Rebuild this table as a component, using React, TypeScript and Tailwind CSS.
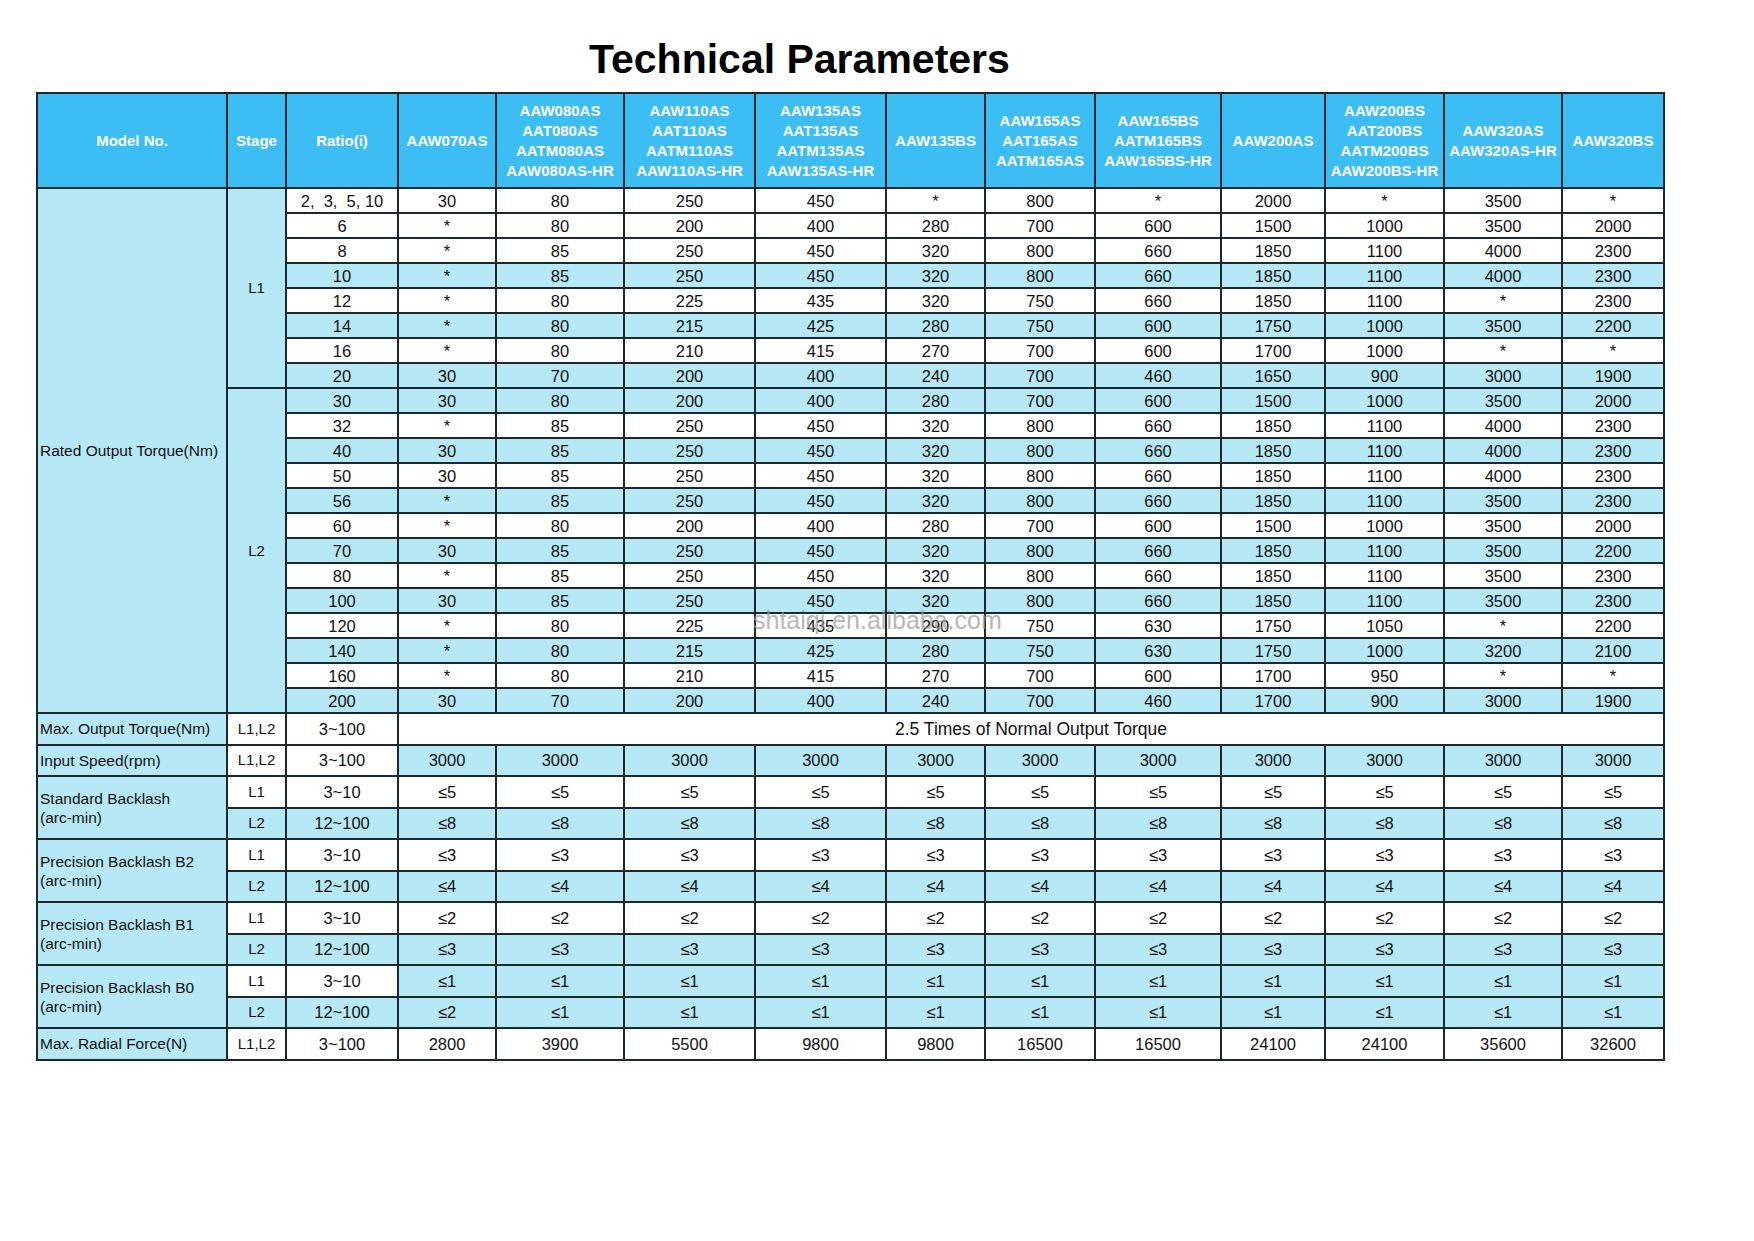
const font = "font-['Liberation_Sans',Arial,sans-serif]";

const models = [
  ["AAW070AS"],
  ["AAW080AS", "AAT080AS", "AATM080AS", "AAW080AS-HR"],
  ["AAW110AS", "AAT110AS", "AATM110AS", "AAW110AS-HR"],
  ["AAW135AS", "AAT135AS", "AATM135AS", "AAW135AS-HR"],
  ["AAW135BS"],
  ["AAW165AS", "AAT165AS", "AATM165AS"],
  ["AAW165BS", "AATM165BS", "AAW165BS-HR"],
  ["AAW200AS"],
  ["AAW200BS", "AAT200BS", "AATM200BS", "AAW200BS-HR"],
  ["AAW320AS", "AAW320AS-HR"],
  ["AAW320BS"],
];

const widths = [190, 59, 112, 98, 128, 131, 131, 99, 110, 126, 104, 119, 118, 102];

type TRow = { r: string; v: string[]; blue: boolean };

const l1: TRow[] = [
  { r: "2,\u00a0 3,\u00a0 5, 10", v: ["30", "80", "250", "450", "*", "800", "*", "2000", "*", "3500", "*"], blue: false },
  { r: "6", v: ["*", "80", "200", "400", "280", "700", "600", "1500", "1000", "3500", "2000"], blue: false },
  { r: "8", v: ["*", "85", "250", "450", "320", "800", "660", "1850", "1100", "4000", "2300"], blue: false },
  { r: "10", v: ["*", "85", "250", "450", "320", "800", "660", "1850", "1100", "4000", "2300"], blue: true },
  { r: "12", v: ["*", "80", "225", "435", "320", "750", "660", "1850", "1100", "*", "2300"], blue: false },
  { r: "14", v: ["*", "80", "215", "425", "280", "750", "600", "1750", "1000", "3500", "2200"], blue: true },
  { r: "16", v: ["*", "80", "210", "415", "270", "700", "600", "1700", "1000", "*", "*"], blue: false },
  { r: "20", v: ["30", "70", "200", "400", "240", "700", "460", "1650", "900", "3000", "1900"], blue: true },
];

const l2: TRow[] = [
  { r: "30", v: ["30", "80", "200", "400", "280", "700", "600", "1500", "1000", "3500", "2000"], blue: true },
  { r: "32", v: ["*", "85", "250", "450", "320", "800", "660", "1850", "1100", "4000", "2300"], blue: false },
  { r: "40", v: ["30", "85", "250", "450", "320", "800", "660", "1850", "1100", "4000", "2300"], blue: true },
  { r: "50", v: ["30", "85", "250", "450", "320", "800", "660", "1850", "1100", "4000", "2300"], blue: false },
  { r: "56", v: ["*", "85", "250", "450", "320", "800", "660", "1850", "1100", "3500", "2300"], blue: true },
  { r: "60", v: ["*", "80", "200", "400", "280", "700", "600", "1500", "1000", "3500", "2000"], blue: false },
  { r: "70", v: ["30", "85", "250", "450", "320", "800", "660", "1850", "1100", "3500", "2200"], blue: true },
  { r: "80", v: ["*", "85", "250", "450", "320", "800", "660", "1850", "1100", "3500", "2300"], blue: false },
  { r: "100", v: ["30", "85", "250", "450", "320", "800", "660", "1850", "1100", "3500", "2300"], blue: true },
  { r: "120", v: ["*", "80", "225", "435", "290", "750", "630", "1750", "1050", "*", "2200"], blue: false },
  { r: "140", v: ["*", "80", "215", "425", "280", "750", "630", "1750", "1000", "3200", "2100"], blue: true },
  { r: "160", v: ["*", "80", "210", "415", "270", "700", "600", "1700", "950", "*", "*"], blue: false },
  { r: "200", v: ["30", "70", "200", "400", "240", "700", "460", "1700", "900", "3000", "1900"], blue: true },
];

const same = (s: string) => Array(11).fill(s);

// backlash groups: L1 row + L2 row each
const backlash = [
  { label: ["Standard Backlash", "(arc-min)"], a: same("≤5"), b: same("≤8"), aBlue: false },
  { label: ["Precision Backlash B2", "(arc-min)"], a: same("≤3"), b: same("≤4"), aBlue: false },
  { label: ["Precision Backlash B1", "(arc-min)"], a: same("≤2"), b: same("≤3"), aBlue: false },
  { label: ["Precision Backlash B0", "(arc-min)"], a: same("≤1"), b: ["≤2", ...Array(10).fill("≤1")], aBlue: true },
];

const radial = ["2800", "3900", "5500", "9800", "9800", "16500", "16500", "24100", "24100", "35600", "32600"];

const bd = "border-2 border-[#1b2830] p-0";
const lb = "bg-[#b6e8f5]";
const num = "text-center text-[16.5px] leading-5 text-[#111]";
const small = "text-center text-[15px] leading-5 text-[#111]";
const label = "text-[15.5px] text-[#111] pl-[2px] whitespace-nowrap";

function Cells({ values, blue }: { values: string[]; blue: boolean }) {
  return (
    <>
      {values.map((v, i) => (
        <td key={i} className={`${bd} ${num} ${blue ? lb : "bg-white"}`}>
          {v}
        </td>
      ))}
    </>
  );
}

export default function App() {
  return (
    <div className={`${font} bg-white w-[1754px] h-[1241px] relative`}>
      <h1 className="pt-[35px] pl-[589px] text-[41px] leading-[48px] font-bold text-black">
        Technical Parameters
      </h1>
      <table className="ml-[36px] mt-[9px] table-fixed border-collapse w-[1629px]">
        <colgroup>
          {widths.map((w, i) => (
            <col key={i} style={{ width: w }} />
          ))}
        </colgroup>
        <thead>
          <tr className="h-[95px] bg-[#3cbef4] text-white font-bold text-[15px] leading-5">
            <th className={`${bd} font-bold`}>Model No.</th>
            <th className={`${bd} font-bold`}>Stage</th>
            <th className={`${bd} font-bold`}>Ratio(i)</th>
            {models.map((m, i) => (
              <th key={i} className={`${bd} font-bold whitespace-nowrap`}>
                {m.map((line) => (
                  <div key={line}>{line}</div>
                ))}
              </th>
            ))}
          </tr>
        </thead>
        <tbody>
          {l1.map((row, i) => (
            <tr key={"a" + i} className="h-[25px]">
              {i === 0 && (
                <td rowSpan={21} className={`${bd} ${lb} ${label} leading-5`}>
                  Rated Output Torque(Nm)
                </td>
              )}
              {i === 0 && (
                <td rowSpan={8} className={`${bd} ${lb} ${small}`}>
                  L1
                </td>
              )}
              <td className={`${bd} ${num} ${row.blue ? lb : "bg-white"} whitespace-pre`}>{row.r}</td>
              <Cells values={row.v} blue={row.blue} />
            </tr>
          ))}
          {l2.map((row, i) => (
            <tr key={"b" + i} className="h-[25px]">
              {i === 0 && (
                <td rowSpan={13} className={`${bd} ${lb} ${small}`}>
                  L2
                </td>
              )}
              <td className={`${bd} ${num} ${row.blue ? lb : "bg-white"}`}>{row.r}</td>
              <Cells values={row.v} blue={row.blue} />
            </tr>
          ))}

          <tr className="h-[31.5px]">
            <td className={`${bd} ${lb} ${label}`}>Max. Output Torque(Nm)</td>
            <td className={`${bd} bg-white ${small}`}>L1,L2</td>
            <td className={`${bd} bg-white ${num}`}>3~100</td>
            <td colSpan={11} className={`${bd} bg-white text-center text-[17.5px] leading-5 text-[#111]`}>
              2.5 Times of Normal Output Torque
            </td>
          </tr>
          <tr className="h-[31.5px]">
            <td className={`${bd} ${lb} ${label}`}>Input Speed(rpm)</td>
            <td className={`${bd} bg-white ${small}`}>L1,L2</td>
            <td className={`${bd} bg-white ${num}`}>3~100</td>
            <Cells values={same("3000")} blue={true} />
          </tr>

          {backlash.map((g) => [
            <tr key={g.label[0] + "1"} className="h-[31.5px]">
              <td rowSpan={2} className={`${bd} ${lb} ${label} leading-[19px]`}>
                {g.label[0]}
                <br />
                {g.label[1]}
              </td>
              <td className={`${bd} bg-white ${small}`}>L1</td>
              <td className={`${bd} bg-white ${num}`}>3~10</td>
              <Cells values={g.a} blue={g.aBlue} />
            </tr>,
            <tr key={g.label[0] + "2"} className="h-[31.5px]">
              <td className={`${bd} ${lb} ${small}`}>L2</td>
              <td className={`${bd} ${lb} ${num}`}>12~100</td>
              <Cells values={g.b} blue={true} />
            </tr>,
          ])}

          <tr className="h-[31.5px]">
            <td className={`${bd} ${lb} ${label}`}>Max. Radial Force(N)</td>
            <td className={`${bd} bg-white ${small}`}>L1,L2</td>
            <td className={`${bd} bg-white ${num}`}>3~100</td>
            <Cells values={radial} blue={false} />
          </tr>
        </tbody>
      </table>

      {/* watermark */}
      <div className="absolute left-[753px] top-[605px] text-[25px] leading-[30px] text-[#9a9a9a] opacity-70 pointer-events-none">
        shtaiqi.en.alibaba.com
      </div>
    </div>
  );
}
